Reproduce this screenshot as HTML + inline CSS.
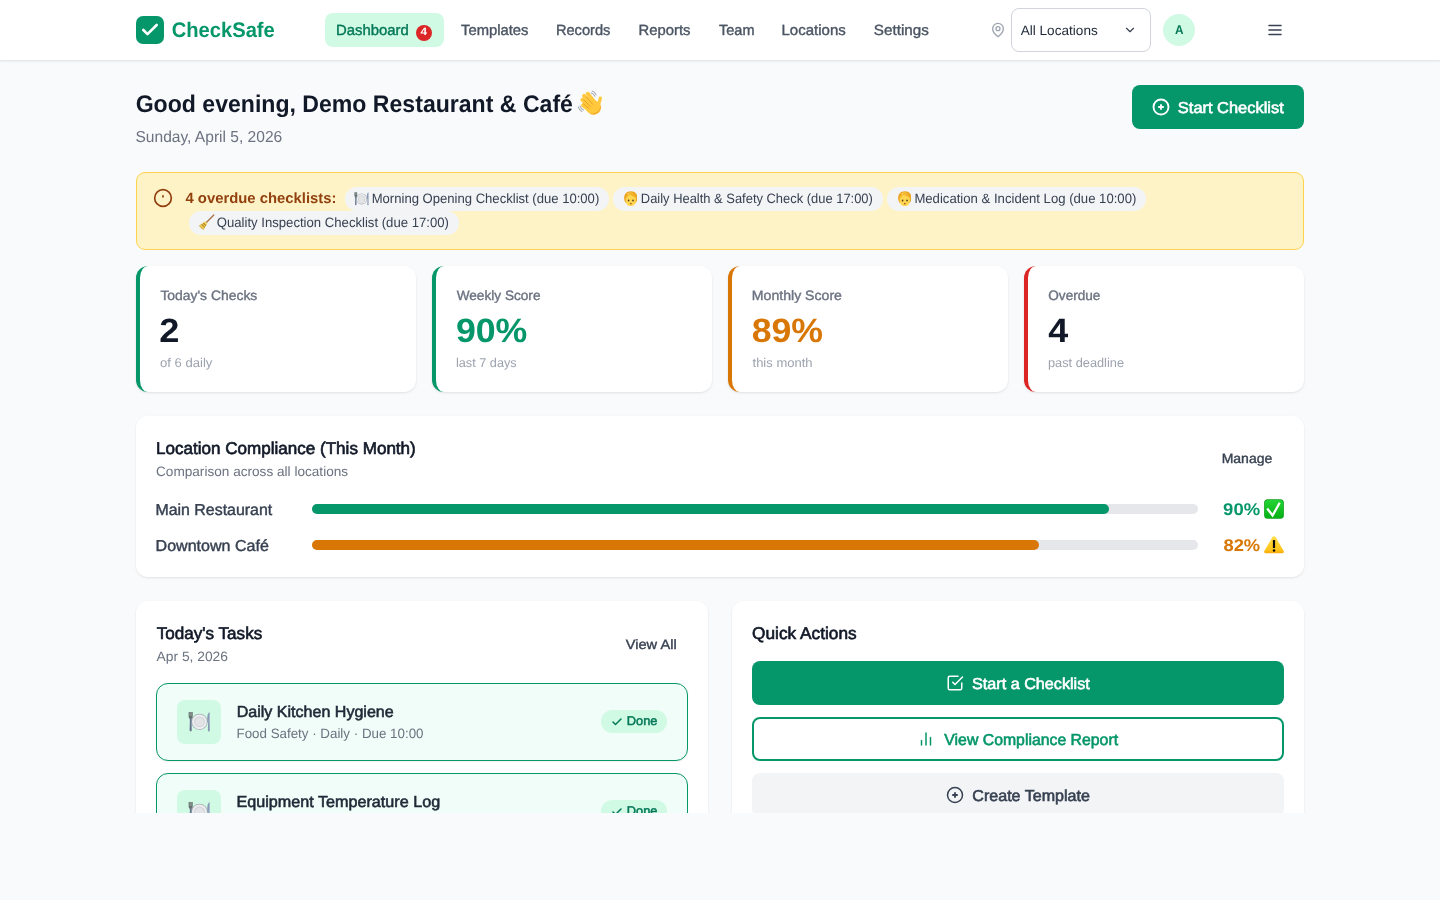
<!DOCTYPE html>
<html lang="en"><head><meta charset="utf-8"><title>CheckSafe</title>
<style>
html,body{margin:0;padding:0}
body{width:1440px;height:900px;overflow:hidden;background:#f9fafb;position:relative;font-family:"Liberation Sans",sans-serif;will-change:transform}
.t{position:absolute;white-space:nowrap;font-family:"Liberation Sans",sans-serif;text-rendering:geometricPrecision}
</style></head><body>
<div style="position:absolute;left:0px;top:0px;width:1440px;height:60px;background:#fff;border-bottom:1px solid #e5e7eb;box-shadow:0 1px 2px rgba(0,0,0,.05)"></div>
<div style="position:absolute;left:136px;top:16px;width:28px;height:28px;background:#059669;border-radius:7px"></div>
<svg style="position:absolute;left:136px;top:16px" width="28" height="28" viewBox="0 0 28 28"><path d="M7.330 14 11.500 18.170 20.670 9" stroke="#fff" stroke-width="2.600" fill="none" stroke-linecap="round" stroke-linejoin="round"/></svg>
<div style="position:absolute;left:325px;top:13.25px;width:119px;height:33.5px;background:#d1fae5;border-radius:8px"></div>
<div style="position:absolute;left:416px;top:25px;width:16px;height:16px;background:#dc2626;border-radius:8px"></div>
<svg style="position:absolute;left:990px;top:22px" width="16" height="16" viewBox="0 0 24 24" fill="none" stroke="#9ca3af" stroke-width="2" stroke-linecap="round" stroke-linejoin="round"><path d="M20 10c0 6-8 12-8 12s-8-6-8-12a8 8 0 0 1 16 0Z"/><circle cx="12" cy="10" r="3"/></svg>
<div style="position:absolute;left:1011px;top:8px;width:140px;height:44px;box-sizing:border-box;background:#fff;border:1px solid #d1d5db;border-radius:8px"></div>
<svg style="position:absolute;left:1122.750px;top:23.250px" width="14" height="14" viewBox="0 0 24 24" fill="none" stroke="#374151" stroke-width="2" stroke-linecap="round" stroke-linejoin="round"><path d="m6 9 6 6 6-6"/></svg>
<div style="position:absolute;left:1163px;top:14px;width:32px;height:32px;background:#d1fae5;border-radius:16px"></div>
<svg style="position:absolute;left:1266px;top:21px" width="18" height="18" viewBox="0 0 24 24" fill="none" stroke="#374151" stroke-width="2" stroke-linecap="round"><path d="M4 6h16M4 12h16M4 18h16"/></svg>
<svg style="position:absolute;left:576px;top:88px" width="28" height="28" viewBox="0 0 28 28">
<path d="M10.200 19.200C11.500 14.200 17.500 11.200 21.800 13.600 25.600 15.900 26 21.600 22.600 24.800 19.500 27.600 14.600 27.200 11.500 23.800 10.200 22.400 9.800 20.800 10.200 19.200Z" fill="#FFC83D"/>
<g stroke="#FFC83D" stroke-linecap="round" fill="none">
<path d="M11.700 5.700 18.400 14" stroke-width="3.900"/>
<path d="M8 7.900 16 16.600" stroke-width="3.900"/>
<path d="M6.400 11.900 14 19.200" stroke-width="3.900"/>
<path d="M6.900 17.300 12.800 21.800" stroke-width="3.700"/>
<path d="M24.300 10.100C24 13 23 15.200 22 18" stroke-width="3.300"/>
</g>
<path d="M13 25.200C16.500 27.300 20.800 26.600 23.300 23.600 25 21.500 25.500 18.800 24.800 16.500 24.600 20.500 22.500 23.800 18.800 24.900 16.800 25.500 14.800 25.600 13 25.200Z" fill="#F2A92B"/>
<g stroke="#E39A1F" stroke-width=".85" stroke-linecap="round" fill="none">
<path d="M10.300 8.900 16.600 16.200"/><path d="M7.700 11.700 14.300 18.500"/><path d="M7.300 15.700 12.600 20.300"/>
</g>
<g stroke="#A7ADB7" stroke-width="1.050" stroke-linecap="round" fill="none">
<path d="M16.100 3.100C18 3.700 19.400 5 20.100 6.900"/><path d="M15.200 5C16.800 5.500 18.100 6.600 18.900 8.200"/>
<path d="M2.300 19C2.900 21 4.200 22.600 6 23.600"/><path d="M3.900 17.900C4.500 19.700 5.700 21.100 7.400 22"/>
</g>
</svg>
<div style="position:absolute;left:1132px;top:85px;width:172px;height:44px;background:#059669;border-radius:8px"></div>
<svg style="position:absolute;left:1152px;top:98px" width="18" height="18" viewBox="0 0 24 24" fill="none" stroke="#fff" stroke-width="2.500" stroke-linecap="round" stroke-linejoin="round"><circle cx="12" cy="12" r="10"/><path d="M9.200 12h5.600M12 9.200v5.600"/></svg>
<div style="position:absolute;left:136px;top:172px;width:1168px;height:78px;box-sizing:border-box;background:#fef3c7;border:1px solid #fcd34d;border-radius:9px"></div>
<svg style="position:absolute;left:153px;top:188px" width="20" height="20" viewBox="0 0 24 24" fill="none" stroke="#92400e" stroke-width="2" stroke-linecap="round" stroke-linejoin="round"><circle cx="12" cy="12" r="10"/><path d="M12 9.300v1.500"/></svg>
<div style="position:absolute;left:344.5px;top:187px;width:264px;height:23.5px;background:#f3f4f6;border-radius:12px"></div>
<svg style="position:absolute;left:353.8px;top:190.6px" width="15.4" height="15.4" viewBox="0 0 36 36">
<circle cx="18" cy="18.500" r="12.800" fill="#A4A9AE"/>
<circle cx="18" cy="18.500" r="11.600" fill="#EDEEF0"/>
<circle cx="18" cy="18.500" r="8.200" fill="#C6C9CD"/>
<circle cx="18" cy="18.700" r="7.200" fill="#E2E3E5"/>
<path d="M7.500 22a11.500 11.500 0 0 0 8 7.700A13 13 0 0 1 7.500 22z" fill="#CFDDEB"/>
<g transform="translate(-1 -1.200)"><path d="M2 4.200h6.400v7.300c0 2-.9 3-2 3.500v3H4v-3c-1.100-.5-2-1.500-2-3.500z" fill="#66746F"/>
<path d="M3.800 4.200v6.500M5.200 4.200v6.500M6.600 4.200v6.500" stroke="#A9B6B3" stroke-width=".6"/>
<path d="M4 14.500h2.400l.5 18.500a1.700 1.700 0 0 1-3.400 0z" fill="#687590"/></g>
<path d="M33.800 3c-2.600 1.300-3.600 5.200-3.600 10v6.500h1.300l-.4 12.600a1.500 1.500 0 0 0 3 0z" fill="#8698B2"/>
<path d="M33.800 3v16.500h-1.500c.5-5 .9-11.500 1.500-16.500z" fill="#B4C1D3"/>
</svg>
<div style="position:absolute;left:613px;top:187px;width:270px;height:23.5px;background:#f3f4f6;border-radius:12px"></div>
<svg style="position:absolute;left:623.7px;top:190.7px" width="13.60" height="15.3" viewBox="0 0 32 36">
<path d="M16 .4C6 .4.300 7 .300 16.500c0 5 1.500 9 4.200 11.500h23c2.700-2.500 4.200-6.500 4.200-11.500C31.700 7 26 .4 16 .4z" fill="#EBA421"/>
<path d="M16 8.500C9 8.500 3.800 13.500 3.800 21.500 3.800 30 9.200 35.600 16 35.600s12.200-5.600 12.200-14.100C28.200 13.500 23 8.500 16 8.500z" fill="#FFD651"/>
<path d="M4.300 19.500C6 13 9.500 9.500 14.500 8c2.500 2.800 7 5 13 6C26.500 8 22.300 3.600 16 3.600 9 3.600 3.800 10 4.300 19.500z" fill="#F1AE27"/>
<path d="M7 7.200C10 3.600 15 2 19.800 3 15.800 3.600 12.300 5.400 10.200 9 9.200 8.200 8 7.600 7 7.200z" fill="#FFD867"/>
<path d="M14.500 8C17.500 5.600 21.500 5.500 24.500 7.500c-3-.6-6 0-8 1.800z" fill="#F9C445"/>
<ellipse cx="10.800" cy="22.600" rx="1.900" ry="2.400" fill="#5A391D"/>
<ellipse cx="21.200" cy="22.600" rx="1.900" ry="2.400" fill="#5A391D"/>
<ellipse cx="16" cy="29.800" rx="2.200" ry="1.500" fill="#80491F"/>
</svg>
<div style="position:absolute;left:887px;top:187px;width:259px;height:23.5px;background:#f3f4f6;border-radius:12px"></div>
<svg style="position:absolute;left:897.7px;top:190.7px" width="13.60" height="15.3" viewBox="0 0 32 36">
<path d="M16 .4C6 .4.300 7 .300 16.500c0 5 1.500 9 4.200 11.500h23c2.700-2.500 4.200-6.500 4.200-11.500C31.700 7 26 .4 16 .4z" fill="#EBA421"/>
<path d="M16 8.500C9 8.500 3.800 13.500 3.800 21.500 3.800 30 9.200 35.600 16 35.600s12.200-5.600 12.200-14.100C28.200 13.500 23 8.500 16 8.500z" fill="#FFD651"/>
<path d="M4.300 19.500C6 13 9.500 9.500 14.500 8c2.500 2.800 7 5 13 6C26.500 8 22.300 3.600 16 3.600 9 3.600 3.800 10 4.300 19.500z" fill="#F1AE27"/>
<path d="M7 7.200C10 3.600 15 2 19.800 3 15.800 3.600 12.300 5.400 10.200 9 9.200 8.200 8 7.600 7 7.200z" fill="#FFD867"/>
<path d="M14.500 8C17.500 5.600 21.500 5.500 24.500 7.500c-3-.6-6 0-8 1.800z" fill="#F9C445"/>
<ellipse cx="10.800" cy="22.600" rx="1.900" ry="2.400" fill="#5A391D"/>
<ellipse cx="21.200" cy="22.600" rx="1.900" ry="2.400" fill="#5A391D"/>
<ellipse cx="16" cy="29.800" rx="2.200" ry="1.500" fill="#80491F"/>
</svg>
<div style="position:absolute;left:189px;top:211.2px;width:270px;height:23.5px;background:#f3f4f6;border-radius:12px"></div>
<svg style="position:absolute;left:198px;top:214px" width="17" height="17" viewBox="0 0 17 17">
<path d="M15.800 1.050 8.100 8.750" stroke="#A8754C" stroke-width="1.350" stroke-linecap="round"/>
<path d="M7.250 7.600 9.250 9.600 5.800 15.500C3.600 14.800 2 13.200 1.400 11.200z" fill="#E8C650"/>
<path d="M7.250 7.600 9.250 9.600 8.400 11 5.900 8.500z" fill="#F0D562"/>
<path d="M7.950 11.600 5.300 8.950M6.900 13.400 3.550 10.050" stroke="#B48D2C" stroke-width="1.050" stroke-linecap="butt"/>
<path d="M5.800 15.500C3.600 14.800 2 13.200 1.400 11.200" stroke="#C9A53C" stroke-width=".7" fill="none"/>
</svg>
<div style="position:absolute;left:136px;top:266px;width:280px;height:126px;box-sizing:border-box;background:#fff;border-left:4px solid #059669;border-radius:12px;box-shadow:0 1px 3px rgba(0,0,0,.08),0 1px 2px rgba(0,0,0,.04)"></div>
<div style="position:absolute;left:432px;top:266px;width:280px;height:126px;box-sizing:border-box;background:#fff;border-left:4px solid #059669;border-radius:12px;box-shadow:0 1px 3px rgba(0,0,0,.08),0 1px 2px rgba(0,0,0,.04)"></div>
<div style="position:absolute;left:728px;top:266px;width:280px;height:126px;box-sizing:border-box;background:#fff;border-left:4px solid #d97706;border-radius:12px;box-shadow:0 1px 3px rgba(0,0,0,.08),0 1px 2px rgba(0,0,0,.04)"></div>
<div style="position:absolute;left:1024px;top:266px;width:280px;height:126px;box-sizing:border-box;background:#fff;border-left:4px solid #dc2626;border-radius:12px;box-shadow:0 1px 3px rgba(0,0,0,.08),0 1px 2px rgba(0,0,0,.04)"></div>
<div style="position:absolute;left:136px;top:416px;width:1168px;height:160.5px;background:#fff;border-radius:12px;box-shadow:0 1px 3px rgba(0,0,0,.07),0 1px 2px rgba(0,0,0,.04)"></div>
<div style="position:absolute;left:312px;top:504.2px;width:886px;height:9.8px;background:#e5e7eb;border-radius:5px"></div>
<div style="position:absolute;left:312px;top:504.2px;width:797.2px;height:9.8px;background:#059669;border-radius:5px"></div>
<div style="position:absolute;left:312px;top:540.2px;width:886px;height:9.6px;background:#e5e7eb;border-radius:5px"></div>
<div style="position:absolute;left:312px;top:540.2px;width:727.2px;height:9.6px;background:#d97706;border-radius:5px"></div>
<svg style="position:absolute;left:1264.2px;top:499.3px" width="20" height="20" viewBox="0 0 20 20">
<defs><linearGradient id="gck1264" x1="0" y1="0" x2="0" y2="1"><stop offset="0" stop-color="#23D433"/><stop offset="1" stop-color="#06B016"/></linearGradient></defs>
<rect x=".15" y=".15" width="19.700" height="19.700" rx="3.600" fill="#0C9F1C"/>
<rect x=".9" y=".9" width="18.200" height="18.200" rx="2.900" fill="url(#gck1264)"/>
<path d="M3.200 9.500 8.600 16.400 15.700 3.800" stroke="#fff" stroke-width="2.250" fill="none" stroke-linecap="butt" stroke-linejoin="miter"/>
</svg>
<svg style="position:absolute;left:1264.2px;top:535.2px" width="20" height="20" viewBox="0 0 20 20">
<defs><linearGradient id="gwn1264" x1="0" y1="0" x2="0" y2="1"><stop offset="0" stop-color="#FFDF45"/><stop offset=".8" stop-color="#FFC41A"/><stop offset="1" stop-color="#F7A90A"/></linearGradient></defs>
<path d="M10 1.200c.6 0 1.100.3 1.500.9l8.200 13.900c.6 1.100-.1 2.200-1.400 2.200H1.700c-1.300 0-2-1.100-1.400-2.200L8.500 2.100c.4-.6.900-.9 1.500-.9z" fill="url(#gwn1264)"/>
<rect x="8.900" y="4.900" width="2.200" height="8.200" rx=".6" fill="#0b0b0b"/>
<circle cx="10" cy="15.400" r="1.250" fill="#0b0b0b"/>
</svg>
<div style="position:absolute;left:0;top:590px;width:1440px;height:223px;overflow:hidden"><div style="position:absolute;left:0;top:-590px;width:1440px;height:900px">
<div style="position:absolute;left:136px;top:601px;width:572px;height:300px;background:#fff;border-radius:12px;box-shadow:0 1px 3px rgba(0,0,0,.07),0 1px 2px rgba(0,0,0,.04)"></div>
<div style="position:absolute;left:732px;top:601px;width:572px;height:300px;background:#fff;border-radius:12px;box-shadow:0 1px 3px rgba(0,0,0,.07),0 1px 2px rgba(0,0,0,.04)"></div>
<div style="position:absolute;left:156px;top:683px;width:532px;height:78px;box-sizing:border-box;background:#f0fdf8;border:1.500px solid #059669;border-radius:12px;box-shadow:0 1px 2px rgba(0,0,0,.06)"></div>
<div style="position:absolute;left:156px;top:773px;width:532px;height:78px;box-sizing:border-box;background:#f0fdf8;border:1.500px solid #059669;border-radius:12px;box-shadow:0 1px 2px rgba(0,0,0,.06)"></div>
<div style="position:absolute;left:177px;top:700px;width:44px;height:44px;background:#d1fae5;border-radius:8px"></div>
<svg style="position:absolute;left:187.5px;top:709.5px" width="23" height="23" viewBox="0 0 36 36">
<circle cx="18" cy="18.500" r="12.800" fill="#A4A9AE"/>
<circle cx="18" cy="18.500" r="11.600" fill="#EDEEF0"/>
<circle cx="18" cy="18.500" r="8.200" fill="#C6C9CD"/>
<circle cx="18" cy="18.700" r="7.200" fill="#E2E3E5"/>
<path d="M7.500 22a11.500 11.500 0 0 0 8 7.700A13 13 0 0 1 7.500 22z" fill="#CFDDEB"/>
<g transform="translate(-1 -1.200)"><path d="M2 4.200h6.400v7.300c0 2-.9 3-2 3.500v3H4v-3c-1.100-.5-2-1.500-2-3.500z" fill="#66746F"/>
<path d="M3.800 4.200v6.500M5.200 4.200v6.500M6.600 4.200v6.500" stroke="#A9B6B3" stroke-width=".6"/>
<path d="M4 14.500h2.400l.5 18.500a1.700 1.700 0 0 1-3.400 0z" fill="#687590"/></g>
<path d="M33.800 3c-2.600 1.300-3.600 5.200-3.600 10v6.500h1.300l-.4 12.600a1.500 1.500 0 0 0 3 0z" fill="#8698B2"/>
<path d="M33.800 3v16.500h-1.500c.5-5 .9-11.500 1.500-16.500z" fill="#B4C1D3"/>
</svg>
<div style="position:absolute;left:177px;top:790px;width:44px;height:44px;background:#d1fae5;border-radius:8px"></div>
<svg style="position:absolute;left:187.5px;top:799.5px" width="23" height="23" viewBox="0 0 36 36">
<circle cx="18" cy="18.500" r="12.800" fill="#A4A9AE"/>
<circle cx="18" cy="18.500" r="11.600" fill="#EDEEF0"/>
<circle cx="18" cy="18.500" r="8.200" fill="#C6C9CD"/>
<circle cx="18" cy="18.700" r="7.200" fill="#E2E3E5"/>
<path d="M7.500 22a11.500 11.500 0 0 0 8 7.700A13 13 0 0 1 7.500 22z" fill="#CFDDEB"/>
<g transform="translate(-1 -1.200)"><path d="M2 4.200h6.400v7.300c0 2-.9 3-2 3.500v3H4v-3c-1.100-.5-2-1.500-2-3.500z" fill="#66746F"/>
<path d="M3.800 4.200v6.500M5.200 4.200v6.500M6.600 4.200v6.500" stroke="#A9B6B3" stroke-width=".6"/>
<path d="M4 14.500h2.400l.5 18.500a1.700 1.700 0 0 1-3.400 0z" fill="#687590"/></g>
<path d="M33.800 3c-2.600 1.300-3.600 5.200-3.600 10v6.500h1.300l-.4 12.600a1.500 1.500 0 0 0 3 0z" fill="#8698B2"/>
<path d="M33.800 3v16.500h-1.500c.5-5 .9-11.500 1.500-16.500z" fill="#B4C1D3"/>
</svg>
<div style="position:absolute;left:601px;top:710px;width:66px;height:23px;background:#d1fae5;border-radius:12px"></div>
<div style="position:absolute;left:601px;top:800px;width:66px;height:23px;background:#d1fae5;border-radius:12px"></div>
<svg style="position:absolute;left:611px;top:716px" width="12" height="12" viewBox="0 0 24 24" fill="none" stroke="#047857" stroke-width="3" stroke-linecap="round" stroke-linejoin="round"><path d="M20 6 9 17l-5-5"/></svg>
<svg style="position:absolute;left:611px;top:806px" width="12" height="12" viewBox="0 0 24 24" fill="none" stroke="#047857" stroke-width="3" stroke-linecap="round" stroke-linejoin="round"><path d="M20 6 9 17l-5-5"/></svg>
<div style="position:absolute;left:752px;top:661px;width:532px;height:44px;background:#059669;border-radius:8px"></div>
<div style="position:absolute;left:752px;top:717px;width:532px;height:44px;box-sizing:border-box;background:#fff;border:2px solid #059669;border-radius:8px"></div>
<div style="position:absolute;left:752px;top:773px;width:532px;height:44px;background:#f3f4f6;border-radius:8px"></div>
<svg style="position:absolute;left:946px;top:674px" width="18" height="18" viewBox="0 0 24 24" fill="none" stroke="#fff" stroke-width="2" stroke-linecap="round" stroke-linejoin="round"><path d="m9 11 3 3L22 4"/><path d="M21 12v7a2 2 0 0 1-2 2H5a2 2 0 0 1-2-2V5a2 2 0 0 1 2-2h11"/></svg>
<svg style="position:absolute;left:917px;top:730px" width="18" height="18" viewBox="0 0 24 24" fill="none" stroke="#059669" stroke-width="2" stroke-linecap="round"><path d="M18 20V10M12 20V4M6 20v-6"/></svg>
<svg style="position:absolute;left:946px;top:786px" width="18" height="18" viewBox="0 0 24 24" fill="none" stroke="#374151" stroke-width="2" stroke-linecap="round" stroke-linejoin="round"><circle cx="12" cy="12" r="10"/><path d="M9.200 12h5.600M12 9.200v5.600" stroke-width="2.400"/></svg>
<span id="tt" class="t" style="left:156px;top:623px;font-size:17.0px;line-height:21px;font-weight:400;-webkit-text-stroke:0.63px #111827;color:#111827;transform:translateX(0.73px) scaleX(1.0050);transform-origin:0 0">Today's Tasks</span>
<span id="td" class="t" style="left:156px;top:648px;font-size:13.55px;line-height:17px;font-weight:400;color:#6b7280;transform:translateX(0.56px) scaleX(1.0193);transform-origin:0 0">Apr 5, 2026</span>
<span id="va" class="t" style="left:625px;top:636px;font-size:13.55px;line-height:17px;font-weight:400;-webkit-text-stroke:0.37px #374151;color:#374151;transform:translateX(0.75px) scaleX(1.0789);transform-origin:0 0">View All</span>
<span id="k1t" class="t" style="left:236px;top:703px;font-size:15.85px;line-height:20px;font-weight:400;-webkit-text-stroke:0.59px #1f2937;color:#1f2937;transform:translateX(0.69px) scaleX(1.0131);transform-origin:0 0">Daily Kitchen Hygiene</span>
<span id="k1s" class="t" style="left:236px;top:725px;font-size:13.55px;line-height:17px;font-weight:400;color:#6b7280;transform:translateX(0.50px) scaleX(0.9854);transform-origin:0 0">Food Safety · Daily · Due 10:00</span>
<span id="d1" class="t" style="left:626px;top:713px;font-size:12.65px;line-height:16px;font-weight:400;-webkit-text-stroke:0.47px #047857;color:#047857;transform:translateX(0.70px) scaleX(1.0175);transform-origin:0 0">Done</span>
<span id="k2t" class="t" style="left:236px;top:793px;font-size:15.85px;line-height:20px;font-weight:400;-webkit-text-stroke:0.59px #1f2937;color:#1f2937;transform:translateX(0.47px) scaleX(1.0202);transform-origin:0 0">Equipment Temperature Log</span>
<span id="k2s" class="t" style="left:236px;top:815px;font-size:13.55px;line-height:17px;font-weight:400;color:#6b7280;transform:translateX(0.50px) scaleX(0.9854);transform-origin:0 0">Food Safety · Daily · Due 10:00</span>
<span id="d2" class="t" style="left:626px;top:803px;font-size:12.65px;line-height:16px;font-weight:400;-webkit-text-stroke:0.47px #047857;color:#047857;transform:translateX(0.70px) scaleX(1.0175);transform-origin:0 0">Done</span>
<span id="qa" class="t" style="left:752px;top:623px;font-size:17.0px;line-height:21px;font-weight:400;-webkit-text-stroke:0.63px #111827;color:#111827;transform:translateX(0.07px) scaleX(1.0160);transform-origin:0 0">Quick Actions</span>
<span id="q1" class="t" style="left:972px;top:675px;font-size:15.85px;line-height:20px;font-weight:400;-webkit-text-stroke:0.59px #ffffff;color:#ffffff;transform:translateX(0.04px) scaleX(1.0203);transform-origin:0 0">Start a Checklist</span>
<span id="q2" class="t" style="left:944px;top:731px;font-size:15.85px;line-height:20px;font-weight:400;-webkit-text-stroke:0.59px #059669;color:#059669;transform:translateX(0.35px) scaleX(0.9979);transform-origin:0 0">View Compliance Report</span>
<span id="q3" class="t" style="left:972px;top:787px;font-size:15.85px;line-height:20px;font-weight:400;-webkit-text-stroke:0.59px #374151;color:#374151;transform:translateX(0.31px) scaleX(1.0139);transform-origin:0 0">Create Template</span>
</div></div>
<span id="logo" class="t" style="left:171px;top:18px;font-size:21.1px;line-height:26px;font-weight:700;color:#059669;transform:translateX(0.69px) scaleX(0.9558);transform-origin:0 0">CheckSafe</span>
<span id="n0" class="t" style="left:335px;top:22px;font-size:14.75px;line-height:18px;font-weight:400;-webkit-text-stroke:0.40px #047857;color:#047857;transform:translateX(0.89px) scaleX(1.0108);transform-origin:0 0">Dashboard</span>
<span id="bd" class="t" style="left:420px;top:26px;font-size:10.6px;line-height:13px;font-weight:700;color:#ffffff;transform:translateX(0.50px) scaleX(1.1127);transform-origin:0 0">4</span>
<span id="n1" class="t" style="left:461px;top:22px;font-size:14.75px;line-height:18px;font-weight:400;-webkit-text-stroke:0.40px #4b5563;color:#4b5563;transform:translateX(0.04px) scaleX(1.0021);transform-origin:0 0">Templates</span>
<span id="n2" class="t" style="left:555px;top:22px;font-size:14.75px;line-height:18px;font-weight:400;-webkit-text-stroke:0.40px #4b5563;color:#4b5563;transform:translateX(0.89px) scaleX(0.9934);transform-origin:0 0">Records</span>
<span id="n3" class="t" style="left:638px;top:22px;font-size:14.75px;line-height:18px;font-weight:400;-webkit-text-stroke:0.40px #4b5563;color:#4b5563;transform:translateX(0.58px) scaleX(1.0052);transform-origin:0 0">Reports</span>
<span id="n4" class="t" style="left:719px;top:22px;font-size:14.75px;line-height:18px;font-weight:400;-webkit-text-stroke:0.40px #4b5563;color:#4b5563;transform:translateX(0.00px) scaleX(0.9837);transform-origin:0 0">Team</span>
<span id="n5" class="t" style="left:781px;top:22px;font-size:14.75px;line-height:18px;font-weight:400;-webkit-text-stroke:0.40px #4b5563;color:#4b5563;transform:translateX(0.52px) scaleX(1.0168);transform-origin:0 0">Locations</span>
<span id="n6" class="t" style="left:873px;top:22px;font-size:14.75px;line-height:18px;font-weight:400;-webkit-text-stroke:0.40px #4b5563;color:#4b5563;transform:translateX(0.86px) scaleX(1.0305);transform-origin:0 0">Settings</span>
<span id="sel" class="t" style="left:1020px;top:22px;font-size:13.55px;line-height:17px;font-weight:400;color:#1f2937;transform:translateX(0.68px) scaleX(1.0031);transform-origin:0 0">All Locations</span>
<span id="av" class="t" style="left:1174px;top:22px;font-size:12.65px;line-height:16px;font-weight:700;color:#047857;transform:translateX(0.94px) scaleX(0.9348);transform-origin:0 0">A</span>
<span id="h1" class="t" style="left:135px;top:90px;font-size:24.0px;line-height:30px;font-weight:700;color:#111827;transform:translateX(0.67px) scaleX(0.9615);transform-origin:0 0">Good evening, Demo Restaurant &amp; Café</span>
<span id="date" class="t" style="left:135px;top:128px;font-size:15.85px;line-height:20px;font-weight:400;color:#6b7280;transform:translateX(0.45px) scaleX(0.9822);transform-origin:0 0">Sunday, April 5, 2026</span>
<span id="startb" class="t" style="left:1177px;top:99px;font-size:15.85px;line-height:20px;font-weight:400;-webkit-text-stroke:0.59px #ffffff;color:#ffffff;transform:translateX(0.87px) scaleX(1.0365);transform-origin:0 0">Start Checklist</span>
<span id="al" class="t" style="left:185px;top:190px;font-size:14.75px;line-height:18px;font-weight:700;color:#92400e;transform:translateX(0.48px) scaleX(1.0063);transform-origin:0 0">4 overdue checklists:</span>
<span id="c1" class="t" style="left:371px;top:190px;font-size:13.55px;line-height:17px;font-weight:400;color:#374151;transform:translateX(0.68px) scaleX(0.9655);transform-origin:0 0">Morning Opening Checklist (due 10:00)</span>
<span id="c2" class="t" style="left:640px;top:190px;font-size:13.55px;line-height:17px;font-weight:400;color:#374151;transform:translateX(0.81px) scaleX(0.9541);transform-origin:0 0">Daily Health &amp; Safety Check (due 17:00)</span>
<span id="c3" class="t" style="left:914px;top:190px;font-size:13.55px;line-height:17px;font-weight:400;color:#374151;transform:translateX(0.38px) scaleX(0.9695);transform-origin:0 0">Medication &amp; Incident Log (due 10:00)</span>
<span id="c4" class="t" style="left:216px;top:214px;font-size:13.55px;line-height:17px;font-weight:400;color:#374151;transform:translateX(0.74px) scaleX(0.9695);transform-origin:0 0">Quality Inspection Checklist (due 17:00)</span>
<span id="s1l" class="t" style="left:160px;top:287px;font-size:13.55px;line-height:17px;font-weight:400;-webkit-text-stroke:0.37px #6b7280;color:#6b7280;transform:translateX(0.38px) scaleX(1.0260);transform-origin:0 0">Today's Checks</span>
<span id="s1v" class="t" style="left:159px;top:310px;font-size:33.7px;line-height:42px;font-weight:700;color:#111827;transform:translateX(0.29px) scaleX(1.0748);transform-origin:0 0">2</span>
<span id="s1s" class="t" style="left:159px;top:355px;font-size:12.65px;line-height:16px;font-weight:400;color:#9ca3af;transform:translateX(0.97px) scaleX(1.0363);transform-origin:0 0">of 6 daily</span>
<span id="s2l" class="t" style="left:456px;top:287px;font-size:13.55px;line-height:17px;font-weight:400;-webkit-text-stroke:0.37px #6b7280;color:#6b7280;transform:translateX(0.68px) scaleX(1.0058);transform-origin:0 0">Weekly Score</span>
<span id="s2v" class="t" style="left:455px;top:310px;font-size:33.7px;line-height:42px;font-weight:700;color:#059669;transform:translateX(0.89px) scaleX(1.0593);transform-origin:0 0">90%</span>
<span id="s2s" class="t" style="left:455px;top:355px;font-size:12.65px;line-height:16px;font-weight:400;color:#9ca3af;transform:translateX(0.95px) scaleX(1.0044);transform-origin:0 0">last 7 days</span>
<span id="s3l" class="t" style="left:751px;top:287px;font-size:13.55px;line-height:17px;font-weight:400;-webkit-text-stroke:0.37px #6b7280;color:#6b7280;transform:translateX(0.81px) scaleX(1.0411);transform-origin:0 0">Monthly Score</span>
<span id="s3v" class="t" style="left:751px;top:310px;font-size:33.7px;line-height:42px;font-weight:700;color:#d97706;transform:translateX(0.65px) scaleX(1.0594);transform-origin:0 0">89%</span>
<span id="s3s" class="t" style="left:752px;top:355px;font-size:12.65px;line-height:16px;font-weight:400;color:#9ca3af;transform:translateX(0.51px) scaleX(1.0299);transform-origin:0 0">this month</span>
<span id="s4l" class="t" style="left:1048px;top:287px;font-size:13.55px;line-height:17px;font-weight:400;-webkit-text-stroke:0.37px #6b7280;color:#6b7280;transform:translateX(0.31px) scaleX(1.0022);transform-origin:0 0">Overdue</span>
<span id="s4v" class="t" style="left:1048px;top:310px;font-size:33.7px;line-height:42px;font-weight:700;color:#111827;transform:translateX(0.19px) scaleX(1.0665);transform-origin:0 0">4</span>
<span id="s4s" class="t" style="left:1048px;top:355px;font-size:12.65px;line-height:16px;font-weight:400;color:#9ca3af;transform:translateX(0.01px) scaleX(1.0104);transform-origin:0 0">past deadline</span>
<span id="lct" class="t" style="left:155px;top:438px;font-size:17.0px;line-height:21px;font-weight:400;-webkit-text-stroke:0.63px #111827;color:#111827;transform:translateX(0.91px) scaleX(1.0038);transform-origin:0 0">Location Compliance (This Month)</span>
<span id="lcs" class="t" style="left:155px;top:463px;font-size:13.55px;line-height:17px;font-weight:400;color:#6b7280;transform:translateX(0.98px) scaleX(1.0047);transform-origin:0 0">Comparison across all locations</span>
<span id="mng" class="t" style="left:1221px;top:450px;font-size:13.55px;line-height:17px;font-weight:400;-webkit-text-stroke:0.37px #374151;color:#374151;transform:translateX(0.65px) scaleX(1.0341);transform-origin:0 0">Manage</span>
<span id="l1" class="t" style="left:155px;top:501px;font-size:15.85px;line-height:20px;font-weight:400;-webkit-text-stroke:0.43px #374151;color:#374151;transform:translateX(0.40px) scaleX(1.0048);transform-origin:0 0">Main Restaurant</span>
<span id="l2" class="t" style="left:155px;top:537px;font-size:15.85px;line-height:20px;font-weight:400;-webkit-text-stroke:0.43px #374151;color:#374151;transform:translateX(0.59px) scaleX(1.0123);transform-origin:0 0">Downtown Café</span>
<span id="p1" class="t" style="left:1223px;top:499px;font-size:17.0px;line-height:21px;font-weight:700;color:#059669;transform:translateX(0.11px) scaleX(1.0861);transform-origin:0 0">90%</span>
<span id="p2" class="t" style="left:1223px;top:535px;font-size:17.0px;line-height:21px;font-weight:700;color:#d97706;transform:translateX(0.46px) scaleX(1.0781);transform-origin:0 0">82%</span>
</body></html>
